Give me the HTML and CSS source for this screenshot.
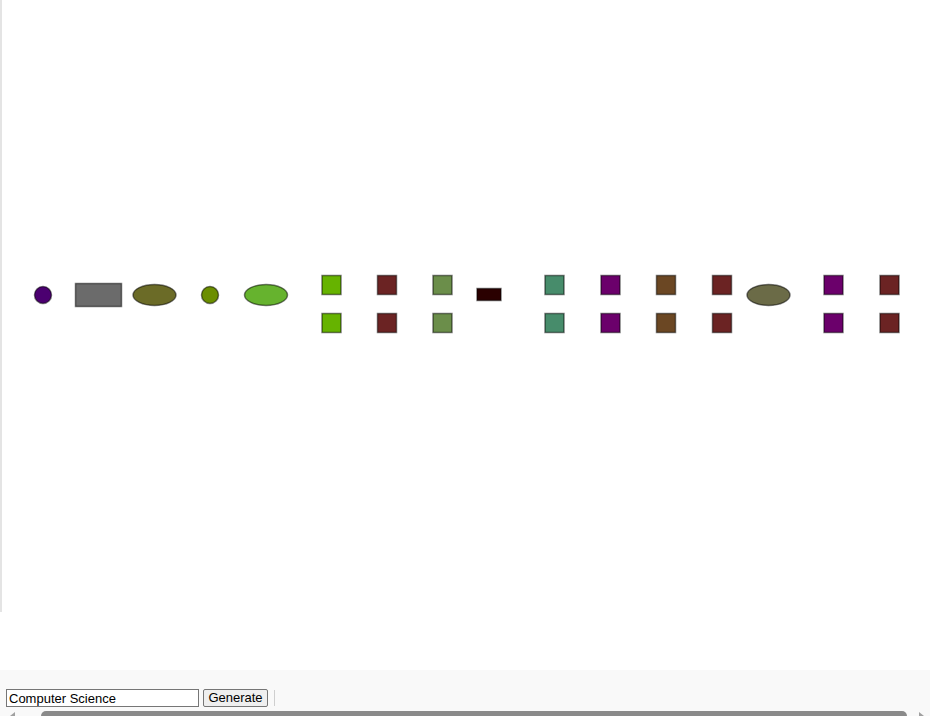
FILE: index.html
```html
<!DOCTYPE html>
<html>
<head>
<meta charset="utf-8">
<link rel="stylesheet" href="styles.css">
</head>
<body>
<div class="stage">
  <svg class="graph" width="928" height="612" viewBox="2 0 928 612" xmlns="http://www.w3.org/2000/svg">
    <g class="nodes" stroke="#000" stroke-opacity="0.5" stroke-width="1.5">
      <circle cx="43" cy="295" r="8.5" fill="#4b0070"/>
      <rect x="75.5" y="283.5" width="46" height="23" fill="#6b6b6b"/>
      <ellipse cx="154.5" cy="295" rx="21.5" ry="10.5" fill="#6b6b27"/>
      <circle cx="210" cy="295" r="8.5" fill="#6b8e00"/>
      <ellipse cx="266" cy="295" rx="21.5" ry="10.5" fill="#66b32e"/>

      <rect x="322" y="275.5" width="19" height="19" fill="#66b300"/>
      <rect x="322" y="313.5" width="19" height="19" fill="#66b300"/>
      <rect x="377.5" y="275.5" width="19" height="19" fill="#6b2323"/>
      <rect x="377.5" y="313.5" width="19" height="19" fill="#6b2323"/>
      <rect x="433" y="275.5" width="19" height="19" fill="#6b8e4a"/>
      <rect x="433" y="313.5" width="19" height="19" fill="#6b8e4a"/>
      <rect x="477" y="288.5" width="24" height="12" fill="#2a0000"/>
      <rect x="545" y="275.5" width="19" height="19" fill="#478c6b"/>
      <rect x="545" y="313.5" width="19" height="19" fill="#478c6b"/>
      <rect x="601" y="275.5" width="19" height="19" fill="#6b006b"/>
      <rect x="601" y="313.5" width="19" height="19" fill="#6b006b"/>
      <rect x="656.5" y="275.5" width="19" height="19" fill="#6b4723"/>
      <rect x="656.5" y="313.5" width="19" height="19" fill="#6b4723"/>
      <rect x="712.5" y="275.5" width="19" height="19" fill="#6b2323"/>
      <rect x="712.5" y="313.5" width="19" height="19" fill="#6b2323"/>
      <ellipse cx="768.5" cy="295" rx="21.5" ry="10.5" fill="#6b6b47"/>
      <rect x="824" y="275.5" width="19" height="19" fill="#6b006b"/>
      <rect x="824" y="313.5" width="19" height="19" fill="#6b006b"/>
      <rect x="880" y="275.5" width="19" height="19" fill="#6b2323"/>
      <rect x="880" y="313.5" width="19" height="19" fill="#6b2323"/>
    </g>
  </svg>
  <div class="spacer"></div>
</div>
<div class="toolbar">
  <div class="controls">
    <input class="topic" type="text" value="Computer Science">
    <button class="gen">Generate</button>
    <span class="sep"></span>
  </div>
  <div class="hscroll">
    <span class="arrow left"></span>
    <span class="thumb"></span>
    <span class="arrow right"></span>
  </div>
</div>
</body>
</html>
```
FILE: styles.css
```css
html, body {
  margin: 0;
  padding: 0;
  background: #ffffff;
  overflow: hidden;
}
body {
  width: 930px;
  height: 716px;
  font-family: "Liberation Sans", Arial, sans-serif;
}
.stage {
  height: 670px;
  background: #ffffff;
}
.graph {
  display: block;
  border-left: 2px solid #e4e4e4;
}
.spacer {
  height: 58px;
}
.toolbar {
  height: 46px;
  background: #f9f9f9;
  display: flex;
  flex-direction: column;
}
.controls {
  display: flex;
  align-items: center;
  gap: 4px;
  padding: 19px 0 0 6px;
  height: 18px;
}
.topic {
  box-sizing: border-box;
  width: 193px;
  height: 18px;
  margin: 0;
  padding: 0 2px;
  border: 1px solid #767676;
  background: #fff;
  font-family: "Liberation Sans", Arial, sans-serif;
  font-size: 13px;
  color: #000;
}
.gen {
  box-sizing: border-box;
  width: 65px;
  height: 18px;
  margin: 0;
  padding: 0;
  border: 1px solid #767676;
  border-radius: 2px;
  background: #efefef;
  font-family: "Liberation Sans", Arial, sans-serif;
  font-size: 13px;
  color: #000;
  line-height: 16px;
}
.sep {
  width: 1px;
  height: 16px;
  background: #cfcfcf;
  margin-left: 2px;
}
.hscroll {
  position: relative;
  margin-top: 3px;
  height: 6px;
  display: flex;
  align-items: flex-start;
  overflow: hidden;
}
.thumb {
  margin-left: 41px;
  width: 866px;
  height: 10px;
  border-radius: 5px;
  background: #8a8a8a;
  margin-top: 1px;
}
.arrow {
  position: absolute;
  top: 2px;
  width: 0;
  height: 0;
  border-top: 4px solid transparent;
  border-bottom: 4px solid transparent;
}
.arrow.left {
  left: 10px;
  border-right: 5px solid #a0a0a0;
}
.arrow.right {
  left: 919px;
  border-left: 5px solid #a0a0a0;
}
```
